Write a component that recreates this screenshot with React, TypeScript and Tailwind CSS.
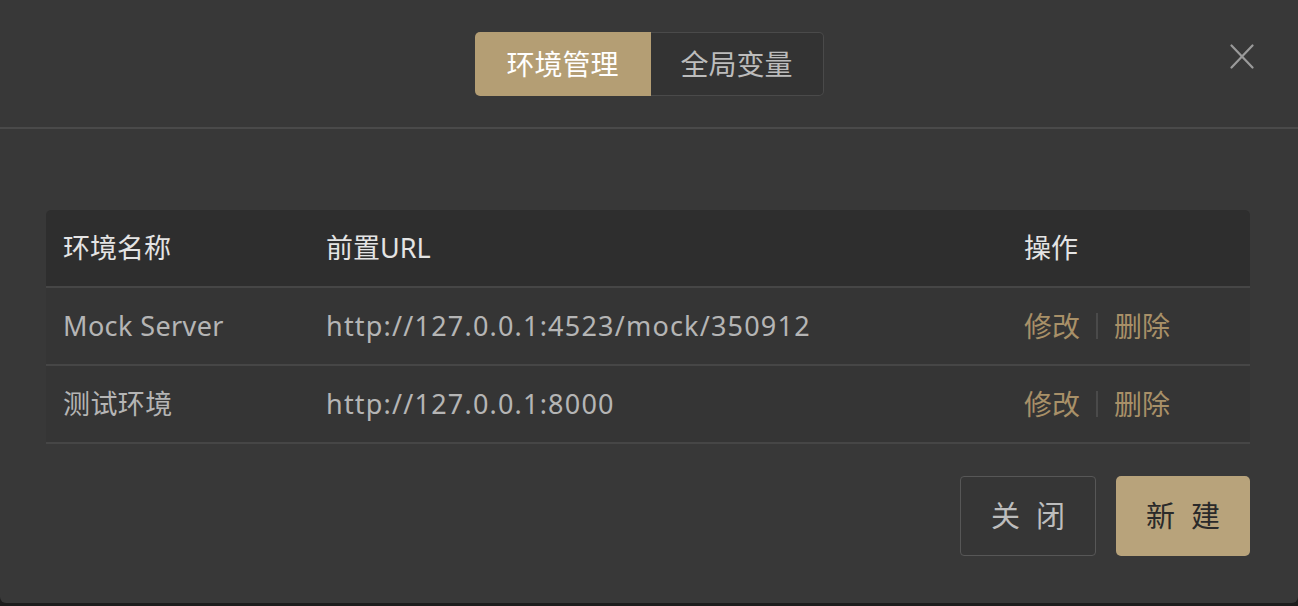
const rows = [
  { name: "Mock Server", url: "http://127.0.0.1:4523/mock/350912" },
  { name: "测试环境", url: "http://127.0.0.1:8000" },
];

const font = { fontFamily: '"Noto Sans", "Noto Sans CJK SC", sans-serif' };

function CloseIcon() {
  return (
    <svg
      className="absolute left-[1230px] top-[44px]"
      width="24"
      height="25"
      viewBox="0 0 24 25"
      stroke="#9a9a9a"
      strokeWidth="2.2"
      strokeLinecap="round"
    >
      <line x1="1.5" y1="1.5" x2="22.5" y2="23.5" />
      <line x1="22.5" y1="1.5" x2="1.5" y2="23.5" />
    </svg>
  );
}

export default function App() {
  return (
    <div className="h-[606px] w-[1298px] bg-[#1c1c1c]" style={font}>
      <div className="flex h-[603px] flex-col rounded-b-[6px] bg-[#383838]">
        <div className="relative flex h-[129px] items-start justify-center border-b-2 border-[#4a4a4a] pt-[32px]">
          <div className="flex h-[64px]">
            <div className="flex w-[176px] items-center justify-center rounded-l-[5px] bg-[#b49e74] text-[28px] text-white">
              环境管理
            </div>
            <div className="flex w-[173px] items-center justify-center rounded-r-[5px] border border-l-0 border-[#4a4a4a] bg-[#333333] text-[28px] text-[#bcbcbc]">
              全局变量
            </div>
          </div>
          <CloseIcon />
        </div>

        <div className="pl-[46px] pr-[48px] pt-[81px]">
          <div className="grid h-[76px] grid-cols-[263px_698px_1fr] items-center rounded-t-[5px] bg-[#2e2e2e] pl-[17px] text-[27px] text-[#e4e4e4]">
            <div>环境名称</div>
            <div>前置URL</div>
            <div>操作</div>
          </div>
          {rows.map((r) => (
            <div
              key={r.name}
              className="grid h-[78px] grid-cols-[263px_698px_1fr] items-center border-t-2 border-[#464646] bg-[#353535] pl-[17px] text-[27px] text-[#b5b5b5]"
            >
              <div className="tracking-[0.4px]">{r.name}</div>
              <div className="tracking-[1.2px]">{r.url}</div>
              <div className="flex items-center text-[28px] text-[#a89068]">
                <span>修改</span>
                <span className="mx-[16px] h-[26px] w-[2px] bg-[#4a4a4a]" />
                <span>删除</span>
              </div>
            </div>
          ))}
          <div className="h-[2px] bg-[#464646]" />

          <div className="mt-[32px] flex justify-end gap-[20px]">
            <button className="flex h-[80px] w-[136px] items-center justify-center gap-[16px] rounded-[4px] border border-[#575757] bg-[#363636] text-[29px] text-[#bdbdbd]">
              <span>关</span>
              <span>闭</span>
            </button>
            <button className="flex h-[80px] w-[134px] items-center justify-center gap-[16px] rounded-[5px] bg-[#b8a37b] text-[29px] text-[#2a2a2a]">
              <span>新</span>
              <span>建</span>
            </button>
          </div>
        </div>
      </div>
    </div>
  );
}
